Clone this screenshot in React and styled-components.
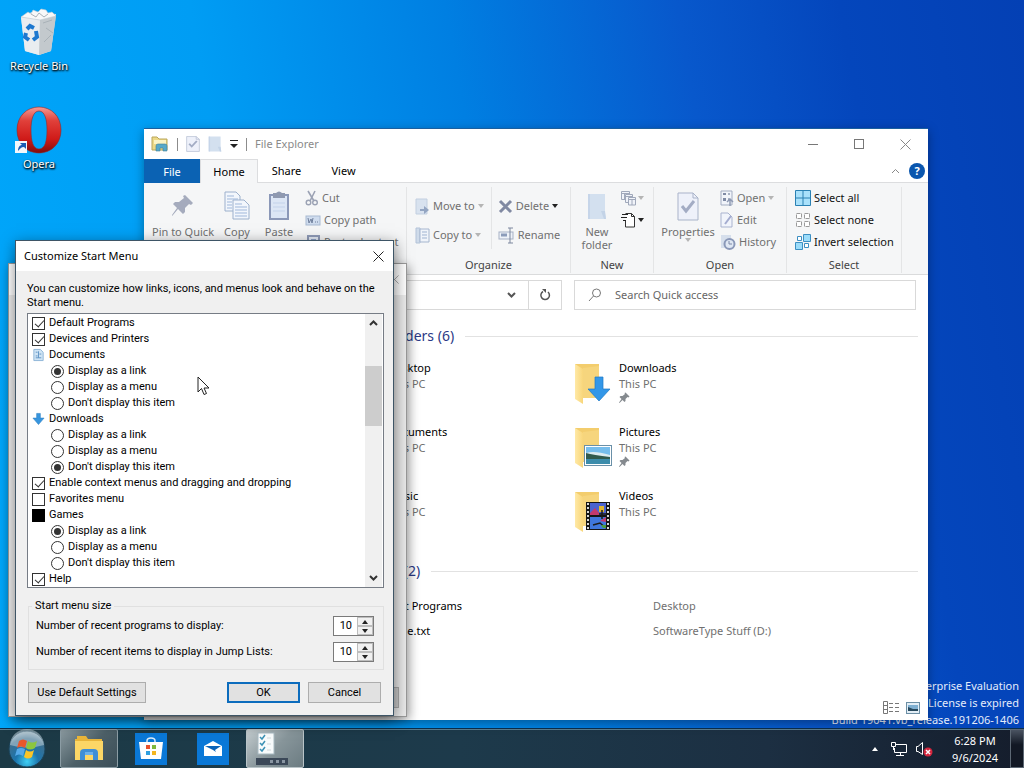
import React from "react";
import styled, { createGlobalStyle, css } from "styled-components";

const GlobalStyle = createGlobalStyle`
	* {
		box-sizing: border-box;
		margin: 0;
		padding: 0;
	}

	body {
		font-family: "Noto Sans", "Open Sans", sans-serif;
		font-size: 11px;
		line-height: 16px;
		color: #000;
		overflow: hidden;
	}

	button,
	input {
		font: inherit;
		color: inherit;
	}

	button {
		border: 0;
		background: transparent;
	}

	svg {
		display: block;
		flex: none;
	}
`;

// # ICONS

const RecycleBin = () => (
	<svg width="40" height="48" viewBox="0 0 40 48">
		<path d="M2 9 L13 4 L37 6 L32 43 L20 47 L6 43Z" fill="#dfe4e8" />
		<path d="M2 9 L21 12 L20 47 L6 43Z" fill="#e9edf0" />
		<path d="M21 12 L37 8 L32 43 L20 47Z" fill="#c3c9cd" />
		<path d="M2 9 L9 4 L12 6 L14 2 L19 4 L22 1 L27 2 L29 5 L33 4 L37 8 L21 12Z" fill="#f7f8f9" stroke="#b8c6cf" strokeWidth=".6" />
		<path d="M12 6 L17 9 L20 5 L25 9 L29 6 M24 15 L33 12 M27 20 L34 25 M25 34 L32 27" stroke="#a9b2b8" fill="none" />
		<g fill="none" stroke="#1d78cf" strokeWidth="4">
			<path d="M8 21 L11 18 L15 20" />
			<path d="M17 23 L18 29 L14 32" />
			<path d="M10 32 L6 29 L7 25" />
		</g>
	</svg>
);

const OperaLogo = () => (
	<svg width="48" height="48" viewBox="0 0 48 48">
		<defs>
			<linearGradient id="opera" x1="0" y1="0" x2="0" y2="1">
				<stop offset="0" stopColor="#f59a94" />
				<stop offset=".3" stopColor="#e0403a" />
				<stop offset=".7" stopColor="#cf1a18" />
				<stop offset="1" stopColor="#7f0d0d" />
			</linearGradient>
		</defs>
		<path
			fillRule="evenodd"
			fill="url(#opera)"
			stroke="#8c2a2e"
			strokeWidth=".6"
			d="M24 1 C36 1 46 10 46 24 C46 38 36 47 24 47 C12 47 2 38 2 24 C2 10 12 1 24 1Z M24 5 C18 5 16 14 16 24 C16 35 18 43 24 43 C30 43 32 35 32 24 C32 14 30 5 24 5Z"
		/>
		<rect x="0" y="35" width="12" height="12" fill="#f4f7fb" />
		<path d="M3 45 C3 41 5 39 7 39 L5 37 H11 V43 L9 41 C6 41 5 43 3 45Z" fill="#1c5cb4" />
	</svg>
);

const ExplorerMini = () => (
	<svg width="18" height="16" viewBox="0 0 18 16">
		<path d="M1 1 H6 L8 3 H16 V14 H1Z" fill="#ecd987" stroke="#b9a65a" />
		<path d="M3 4 H15 V8 H3Z" fill="#fbf3c4" />
		<path d="M5 15 V10 Q5 8 7 8 H14 Q16 8 16 10 V15 H12 V12 H9 V15Z" fill="#57a9c9" stroke="#3f8098" strokeWidth=".6" />
	</svg>
);

const PageCheck = ({ w = 14, h = 16 }) => (
	<svg width={w} height={h} viewBox="0 0 22 29" preserveAspectRatio="none">
		<path d="M1 1 H16 L21 6 V28 H1Z" fill="#eef1fa" stroke="#a9b3c9" />
		<path d="M16 1 V6 H21" fill="none" stroke="#a9b3c9" />
		<path d="M5 14 L9 19 L17 9" fill="none" stroke="#a3acc4" strokeWidth="3" />
	</svg>
);

const FolderPale = ({ w = 14, h = 16 }) => (
	<svg width={w} height={h} viewBox="0 0 20 27" preserveAspectRatio="none">
		<path d="M1 1 H18 V20 L19 26 H1Z" fill="#d3e0ef" />
		<path d="M1 1 H3 V26 H1Z" fill="#c6d5e9" />
		<path d="M14 18 H18 L19 26 H17Z" fill="#c3d3e7" />
	</svg>
);

const PinBig = () => (
	<svg width="22" height="24" viewBox="0 0 22 24">
		<path d="M13 1 L21 9 L19 11 L17 10 L13 14 L13 18 L11 20 L6 15 L1 21 L0 22 L0 21 L5 14 L1 10 L3 8 L7 8 L12 4 L11 2Z" fill="#a5abbd" />
	</svg>
);

const PinSmall = () => (
	<svg width="11" height="12" viewBox="0 0 22 24">
		<path d="M13 1 L21 9 L19 11 L17 10 L13 14 L13 18 L11 20 L7 16 L1 22 L0 21 L5 14 L1 10 L3 8 L7 8 L12 4 L11 2Z" fill="#858a8f" />
	</svg>
);

const CopyBig = () => (
	<svg width="26" height="30" viewBox="0 0 26 30">
		<g fill="#f2f6fc" stroke="#9cb0cc">
			<path d="M1 1 H12 L16 5 V20 H1Z" />
			<path d="M9 9 H20 L25 14 V28 H9Z" />
		</g>
		<path d="M3 5 H10 M3 8 H14 M3 11 H8 M3 14 H8 M3 17 H8 M11 13 H18 M11 16 H23 M11 19 H23 M11 22 H23 M11 25 H23" stroke="#9fb7da" />
	</svg>
);

const PasteBig = () => (
	<svg width="22" height="30" viewBox="0 0 22 30">
		<rect x="2" y="4" width="18" height="24" fill="#dce6f5" stroke="#8b98b8" strokeWidth="2" />
		<path d="M5 2 H8 Q11 -1 14 2 H17 V7 H5Z" fill="#8f99b0" />
		<path d="M5 12 H17 M5 16 H17 M5 20 H17" stroke="#c3d2ea" />
	</svg>
);

const Scissors = () => (
	<svg width="14" height="16" viewBox="0 0 14 16" fill="none" stroke="#9ba2b4">
		<path d="M3 1 L9 11 M10 1 L5 11" strokeWidth="1.6" />
		<circle cx="3.500" cy="12.500" r="2.300" strokeWidth="1.400" />
		<circle cx="10" cy="12.500" r="2.300" strokeWidth="1.400" />
	</svg>
);

const PathIcon = () => (
	<svg width="16" height="16" viewBox="0 0 16 16">
		<rect x="1" y="4" width="14" height="9" fill="#cfdcee" stroke="#a9bad2" />
		<path d="M3 6 L4 11 L6 7 L7 11 L8 6 M10 10 H11 M12 10 H13" stroke="#6f7f9c" fill="none" />
	</svg>
);

const ClipIcon = () => (
	<svg width="16" height="16" viewBox="0 0 16 16">
		<rect x="3" y="2" width="11" height="13" fill="#e4ebf6" stroke="#8f9bb8" strokeWidth="2" />
		<rect x="6" y="5" width="5" height="5" fill="#8fa3c9" />
	</svg>
);

const MoveIcon = () => (
	<svg width="15" height="17" viewBox="0 0 15 17">
		<path d="M1 1 H12 V16 H1Z" fill="#d8e2ef" stroke="#c2cfe0" />
		<path d="M5 11 H9 V8 L14 12 L9 16 V13 H5Z" fill="#93a5c2" />
	</svg>
);

const CopyToIcon = () => (
	<svg width="15" height="17" viewBox="0 0 15 17">
		<path d="M1 1 H5 V16 H1Z" fill="#cfdbea" stroke="#b3c3d8" />
		<path d="M5 2 H14 V15 H5Z" fill="#f0f4fa" stroke="#a6b6cf" />
		<path d="M7 5 H12 M7 8 H12 M7 11 H12" stroke="#9fb3d1" />
	</svg>
);

const DeleteIcon = () => (
	<svg width="15" height="15" viewBox="0 0 15 15">
		<path d="M2 2 L13 13 M13 2 L2 13" stroke="#8089a2" strokeWidth="3" />
	</svg>
);

const RenameIcon = () => (
	<svg width="17" height="17" viewBox="0 0 17 17" fill="none">
		<rect x="1" y="5" width="14" height="7" fill="#eef2f8" stroke="#a7b1c6" />
		<path d="M3 8 H9" stroke="#8c9cba" strokeWidth="3" />
		<path d="M10 1 H15 M12 1 V16 M10 16 H15" stroke="#7d879e" />
	</svg>
);

const NewItemIcon = () => (
	<svg width="16" height="16" viewBox="0 0 16 16" fill="#f0f3f9" stroke="#a0a8ba">
		<path d="M.5 1.500 H8.500 V9.500 H.5Z M.5 3.500 H8.500 M3.500 3.500 V9" />
		<path d="M4.500 4.500 H11.500 V12.500 H4.500Z M4.500 6.500 H11.500" />
		<path d="M7.500 7.500 H14.500 V15 H7.500Z M7.500 9.500 H14.500 M11 9.500 V15" />
	</svg>
);

const EasyAccessIcon = () => (
	<svg width="16" height="16" viewBox="0 0 16 16" fill="none" stroke="#333">
		<path d="M4.500 1.500 H10.500 L13.500 4.500 V15 H4.500 V9" fill="#fff" />
		<path d="M10.500 1.500 V4.500 H13.500" />
		<path d="M1 2.500 H7 M0 5.500 H6 M2 8.500 H5" stroke="#222" />
	</svg>
);

const OpenIcon = () => (
	<svg width="14" height="16" viewBox="0 0 14 16" fill="none">
		<path d="M1 1 H12 V15 H1Z" fill="#f1f4fa" stroke="#a3adc2" />
		<path d="M3 3 H6 V5 H3Z M3 8 H6 V11 H3Z" fill="#7f8aa5" />
		<path d="M8 4 H10 M8 9 H10 M10 16 V10 M7 12 L10 9 L13 12" stroke="#8f9ab3" strokeWidth="1.500" />
	</svg>
);

const EditIcon = () => (
	<svg width="14" height="16" viewBox="0 0 14 16" fill="none">
		<path d="M1 1 H8 L12 5 V15 H1Z" fill="#f1f4fb" stroke="#a9b3cf" />
		<path d="M5 12 L11 4" stroke="#a4acd0" strokeWidth="2" />
	</svg>
);

const HistoryIcon = () => (
	<svg width="16" height="16" viewBox="0 0 16 16" fill="none">
		<path d="M1 1 H11 V14 H1Z" fill="#d6dfec" />
		<circle cx="9.500" cy="10" r="5" fill="#dfe7f3" stroke="#8a98b8" strokeWidth="2" />
		<path d="M9 7 V10 H12" stroke="#7c89a8" />
	</svg>
);

const SelectAllIcon = () => (
	<svg width="16" height="16" viewBox="0 0 16 16">
		<path d="M.5 .5 H15.500 V15.500 H.5Z M8 0 V16 M0 8 H16" fill="#a9e1fb" stroke="#2b81b3" />
	</svg>
);

const SelectNoneIcon = () => (
	<svg width="16" height="16" viewBox="0 0 16 16">
		<path
			d="M1.500 1.500 H6.500 V6.500 H1.500Z M9.500 1.500 H14.500 V6.500 H9.500Z M1.500 9.500 H6.500 V14.500 H1.500Z M9.500 9.500 H14.500 V14.500 H9.500Z"
			fill="#fff"
			stroke="#9b9b9b"
			strokeDasharray="4 1"
		/>
	</svg>
);

const InvertIcon = () => (
	<svg width="16" height="16" viewBox="0 0 16 16" stroke="#3c8fc2">
		<path d="M8.500 .5 H15.500 V7.500 H8.500Z M.5 8.500 H7.500 V15.500 H.5Z" fill="#9bdcfa" />
		<path d="M2.500 2.500 H6.500 V6.500 H2.500Z M9.500 9.500 H13.500 V13.500 H9.500Z" fill="#fff" />
	</svg>
);

const FolderBase = ({ children }) => (
	<svg width="48" height="48" viewBox="0 0 48 48">
		<defs>
			<linearGradient id="flap" x1="0" y1="0" x2="1" y2="0">
				<stop offset="0" stopColor="#ffe9a6" />
				<stop offset="1" stopColor="#f8d67a" />
			</linearGradient>
		</defs>
		<path d="M9 4 H33 V37 H16Z" fill="#f3cd6d" />
		<path d="M9 4 L17 9 V44 L9 39Z" fill="url(#flap)" />
		<path d="M17 8 L33 6 V38 L17 38Z" fill="#f6d57d" />
		{children}
	</svg>
);

const DownloadsFolder = () => (
	<FolderBase>
		<path d="M29 17 H37 V29 H44 L33 41 L22 29 H29Z" fill="#3397e8" stroke="#1d78c6" strokeWidth=".7" />
	</FolderBase>
);

const PicturesFolder = () => (
	<FolderBase>
		<rect x="18.500" y="21.500" width="27" height="20" fill="#fff" stroke="#6a90a8" />
		<rect x="20" y="23" width="24" height="9" fill="#76bdec" />
		<path d="M20 29 Q28 26 44 31 V34 H20Z" fill="#dcebf0" />
		<path d="M20 29 Q27 31 44 33 V36 H20Z" fill="#315a4d" />
		<rect x="20" y="35" width="24" height="5" fill="#3c8cab" />
	</FolderBase>
);

const VideosFolder = () => (
	<FolderBase>
		<rect x="20" y="14" width="24" height="28" fill="#151515" />
		<path d="M22 15 V42 M42 15 V42" stroke="#d8d8d8" strokeWidth="2" strokeDasharray="2 2" />
		<rect x="24" y="15" width="16" height="12" fill="#4b63cf" />
		<rect x="24" y="29" width="16" height="12" fill="#3f77dc" />
		<path d="M24 25 L29 20 L33 25 V27 H24Z M34 33 L40 29 V34Z" fill="#c23a6d" />
		<path d="M33 18 H38 V24 H33Z" fill="#e0b62d" />
		<path d="M33 26 H40 M36 22 V31 M27 37 L34 35 L40 40" stroke="#1b1b1b" strokeWidth="1.500" fill="none" />
		<path d="M35 37 H40 V40 H37Z" fill="#4b9c3f" />
	</FolderBase>
);

const DocMini = () => (
	<svg width="13" height="14" viewBox="0 0 14 14">
		<path d="M2 1 H9 L12 4 V13 H2Z" fill="#cfe4f5" stroke="#8ab3d6" />
		<path d="M4 4 H6 M8 6 H10 M4 8 H6 M4 10 H10 M7 3 V10" stroke="#5e93c4" />
	</svg>
);

const DownMini = () => (
	<svg width="13" height="14" viewBox="0 0 14 14">
		<path d="M5 1 H9 V6 H13 L7 13 L1 6 H5Z" fill="#3795de" stroke="#2a7fc4" strokeWidth=".6" />
	</svg>
);

const BlackMini = () => (
	<svg width="13" height="13" viewBox="0 0 13 13">
		<rect width="13" height="13" fill="#000" />
	</svg>
);

const CloseIcon = ({ size = 11, color = "#222" }) => (
	<svg width={size} height={size} viewBox="0 0 11 11">
		<path d="M.5 .5 L10.500 10.500 M10.500 .5 L.5 10.500" stroke={color} />
	</svg>
);

const Chevron = ({ up, color = "#333", width = 2 }) => (
	<svg width="9" height="6" viewBox="0 0 9 6">
		<path d={up ? "M1 5 L4.500 1.500 L8 5" : "M1 1 L4.500 4.500 L8 1"} fill="none" stroke={color} strokeWidth={width} />
	</svg>
);

const Caret = ({ color = "#222", up }) => (
	<svg width="6" height="4" viewBox="0 0 6 4">
		<path d={up ? "M0 4 H6 L3 0Z" : "M0 0 H6 L3 4Z"} fill={color} />
	</svg>
);

const MoreCaret = () => (
	<svg width="8" height="8" viewBox="0 0 8 8">
		<path d="M0 0 H8 V1 H0Z M0 4 H8 L4 8Z" fill="#222" />
	</svg>
);

const StartOrb = () => (
	<svg width="40" height="40" viewBox="0 0 40 40">
		<defs>
			<radialGradient id="orb" cx=".5" cy=".85" r=".8">
				<stop offset="0" stopColor="#3fd0f5" />
				<stop offset=".4" stopColor="#1c74ac" />
				<stop offset=".8" stopColor="#3d6f8e" />
				<stop offset="1" stopColor="#93aebd" />
			</radialGradient>
		</defs>
		<circle cx="20" cy="20" r="18" fill="url(#orb)" stroke="#1a4258" />
		<path d="M3 16 A17 16 0 0 1 37 16 Q20 21 3 16Z" fill="#c7d8e0" opacity=".5" />
		<path d="M12 12 Q16 9 20 12 L18 19 Q14 16 10 19Z" fill="#e8582c" />
		<path d="M21 12 Q25 15 30 12 L28 19 Q23 22 19 19Z" fill="#8cc63f" />
		<path d="M10 20 Q14 18 18 20 L16 27 Q12 24 8 27Z" fill="#56a9e8" />
		<path d="M19 21 Q23 24 27 21 L25 28 Q21 31 17 28Z" fill="#fbc527" />
	</svg>
);

const TaskFolder = () => (
	<svg width="30" height="28" viewBox="0 0 30 28">
		<path d="M1 4 H3 V1 H12 L14 4 H28 V25 H1Z" fill="#e9b53a" />
		<path d="M1 6 H29 V25 H1Z" fill="#fcd666" />
		<path d="M6 25 V18 Q6 14 10 14 H20 Q24 14 24 18 V25 H19 V20 H11 V25Z" fill="#3f8ed6" />
		<path d="M11 20 H19 V17 H11Z" fill="#6cb0ea" />
	</svg>
);

const StoreIcon = () => (
	<svg width="32" height="32" viewBox="0 0 32 32">
		<rect width="32" height="32" fill="#0a78d7" />
		<path d="M12 10 V8 Q12 5 16 5 Q20 5 20 8 V10" fill="none" stroke="#dcecf9" strokeWidth="1.500" />
		<path d="M4 9 H28 L26 26 H6Z" fill="#fff" />
		<path d="M11 12 H15 V16 H11Z" fill="#e9512b" />
		<path d="M17 12 H21 V16 H17Z" fill="#7fb93c" />
		<path d="M11 18 H15 V22 H11Z" fill="#2f9fe0" />
		<path d="M17 18 H21 V22 H17Z" fill="#f3b51f" />
	</svg>
);

const MailIcon = () => (
	<svg width="32" height="32" viewBox="0 0 32 32">
		<rect width="32" height="32" fill="#0a78d7" />
		<path d="M7 13 L16 8 L25 13 V23 H7Z" fill="#fff" />
		<path d="M8 13 L24 13 L18 17 L19 19 L16 17Z" fill="#0a63b8" />
	</svg>
);

const SettingsTaskIcon = () => (
	<svg width="34" height="34" viewBox="0 0 34 34">
		<rect x="3" y="1" width="16" height="21" fill="#f8fbfc" stroke="#a8bac2" />
		<path d="M5 5 L7 7 L10 3 M5 11 L7 13 L10 9 M5 17 L7 19 L10 15" fill="none" stroke="#3c91b5" strokeWidth="1.500" />
		<path d="M12 6 H16 M12 12 H16 M12 18 H16" stroke="#d0d8dc" />
		<rect x="1" y="26" width="32" height="7" fill="#3b4858" />
		<path d="M15 28 H18 V31 H15Z M21 28 H24 V31 H21Z M27 28 H30 V31 H27Z" fill="#8995a2" />
	</svg>
);

const NetworkIcon = () => (
	<svg width="18" height="16" viewBox="0 0 18 16" fill="none" stroke="#fff">
		<path d="M6 3.500 H16.500 V11.500 H4.500 V7 M10.500 12 V14 M6 14.500 H14" />
		<path d="M1.500 1.500 H5.500 V5.500 H1.500Z M3.500 6 V9" />
	</svg>
);

const VolumeIcon = () => (
	<svg width="18" height="16" viewBox="0 0 18 16" fill="none">
		<path d="M1.500 5.500 H3 L7.500 1.500 V13.500 L3 10.500 H1.500Z" stroke="#fff" />
		<circle cx="13" cy="11" r="4.500" fill="#d5263e" />
		<path d="M11 9 L15 13 M15 9 L11 13" stroke="#fff" strokeWidth="1.500" />
	</svg>
);

const CursorIcon = () => (
	<svg width="13" height="20" viewBox="0 0 13 20">
		<path d="M1 1 V16 L4.500 12.500 L7 18.500 L9.500 17.500 L7 12 H12Z" fill="#fff" stroke="#222" />
	</svg>
);

// # FILE EXPLORER

const Explorer = () => {
	return (
		<ExplorerWindow>
			<QuickBar>
				<ExplorerMini />
				<Divider />
				<PageCheck />
				<FolderPale />
				<MoreCaret />
				<Divider />
				<h1>File Explorer</h1>
				<WindowButtons>
					<button aria-label="Minimize">
						<svg width="11" height="11">
							<path d="M0 5.500 H10" stroke="#777" />
						</svg>
					</button>
					<button aria-label="Maximize">
						<svg width="11" height="11">
							<rect x=".5" y=".5" width="9" height="9" fill="none" stroke="#777" />
						</svg>
					</button>
					<button aria-label="Close">
						<CloseIcon color="#888" />
					</button>
				</WindowButtons>
			</QuickBar>

			<TabBar>
				<Tab $file>File</Tab>
				<Tab $active>Home</Tab>
				<Tab>Share</Tab>
				<Tab>View</Tab>
				<TabTools>
					<button aria-label="Collapse ribbon">
						<Chevron up color="#888" width={1} />
					</button>
					<HelpButton>?</HelpButton>
				</TabTools>
			</TabBar>

			<Ribbon>
				<Group $width="263px">
					<GroupBody $joined>
						<BigButton $width="66px">
							<Glyph>
								<PinBig />
							</Glyph>
							Pin to Quick access
						</BigButton>
						<BigButton $width="42px">
							<Glyph>
								<CopyBig />
							</Glyph>
							Copy
						</BigButton>
						<BigButton $width="42px">
							<Glyph>
								<PasteBig />
							</Glyph>
							Paste
						</BigButton>
						<Stack $inset="5px">
							<SmallButton>
								<Scissors />
								Cut
							</SmallButton>
							<SmallButton>
								<PathIcon />
								Copy path
							</SmallButton>
							<SmallButton>
								<ClipIcon />
								Paste shortcut
							</SmallButton>
						</Stack>
					</GroupBody>
					<GroupLabel>Clipboard</GroupLabel>
				</Group>

				<Group $width="164px">
					<GroupBody>
						<Stack $loose $divided>
							<SmallButton>
								<MoveIcon />
								Move to
								<Caret color="#b5b5b5" />
							</SmallButton>
							<SmallButton>
								<CopyToIcon />
								Copy to
								<Caret color="#b5b5b5" />
							</SmallButton>
						</Stack>
						<Stack $loose>
							<SmallButton>
								<DeleteIcon />
								Delete
								<Caret />
							</SmallButton>
							<SmallButton>
								<RenameIcon />
								Rename
							</SmallButton>
						</Stack>
					</GroupBody>
					<GroupLabel>Organize</GroupLabel>
				</Group>

				<Group $width="83px">
					<GroupBody>
						<BigButton $width="40px">
							<Glyph>
								<FolderPale w={20} h={27} />
							</Glyph>
							New folder
						</BigButton>
						<Stack>
							<SmallButton aria-label="New item" $tight>
								<NewItemIcon />
								<Caret color="#b5b5b5" />
							</SmallButton>
							<SmallButton aria-label="Easy access" $tight>
								<EasyAccessIcon />
								<Caret />
							</SmallButton>
						</Stack>
					</GroupBody>
					<GroupLabel>New</GroupLabel>
				</Group>

				<Group $width="133px">
					<GroupBody>
						<BigButton $width="56px">
							<Glyph>
								<PageCheck w={22} h={29} />
							</Glyph>
							Properties
							<Caret color="#b5b5b5" />
						</BigButton>
						<Stack>
							<SmallButton>
								<OpenIcon />
								Open
								<Caret color="#b5b5b5" />
							</SmallButton>
							<SmallButton>
								<EditIcon />
								Edit
							</SmallButton>
							<SmallButton>
								<HistoryIcon />
								History
							</SmallButton>
						</Stack>
					</GroupBody>
					<GroupLabel>Open</GroupLabel>
				</Group>

				<Group $width="115px">
					<GroupBody>
						<Stack $inset="2px">
							<SmallButton $enabled>
								<SelectAllIcon />
								Select all
							</SmallButton>
							<SmallButton $enabled>
								<SelectNoneIcon />
								Select none
							</SmallButton>
							<SmallButton $enabled>
								<InvertIcon />
								Invert selection
							</SmallButton>
						</Stack>
					</GroupBody>
					<GroupLabel>Select</GroupLabel>
				</Group>
			</Ribbon>

			<AddressRow>
				<AddressBox>
					<button aria-label="Previous locations">
						<Chevron color="#555" />
					</button>
					<button aria-label="Refresh">
						<svg width="12" height="12" viewBox="0 0 12 12">
							<path d="M9 3 A4.300 4.300 0 1 1 4 2.500" fill="none" stroke="#555" strokeWidth="1.500" />
							<path d="M3 0 H7 V4Z" fill="#555" />
						</svg>
					</button>
				</AddressBox>
				<SearchBox>
					<svg width="14" height="14" viewBox="0 0 14 14" fill="none" stroke="#777">
						<circle cx="8.500" cy="5" r="4" />
						<path d="M5.500 8 L1 13" />
					</svg>
					<input type="text" aria-label="Search" placeholder="Search Quick access" />
				</SearchBox>
			</AddressRow>

			<Content>
				<SectionTitle>Frequent folders (6)</SectionTitle>
				<Folders>
					<Folder name="Desktop" icon={<FolderBase />} />
					<Folder name="Downloads" icon={<DownloadsFolder />} pinned />
					<Folder name="Documents" icon={<FolderBase />} />
					<Folder name="Pictures" icon={<PicturesFolder />} pinned />
					<Folder name="Music" icon={<FolderBase />} />
					<Folder name="Videos" icon={<VideosFolder />} />
				</Folders>
				<SectionTitle $recent>Recent files (2)</SectionTitle>
				<Files>
					<tbody>
						<tr>
							<td>Default Programs</td>
							<td>Desktop</td>
						</tr>
						<tr>
							<td>Readme.txt</td>
							<td>SoftwareType Stuff (D:)</td>
						</tr>
					</tbody>
				</Files>
			</Content>

			<StatusBar>
				<button aria-label="Details view">
					<svg width="16" height="13" viewBox="0 0 16 13" fill="none" stroke="#777">
						<path d="M.5 .5 H4.500 V12.500 H.5Z M.5 4.500 H4.500 M.5 8.500 H4.500" />
						<path d="M6 2.500 H10 M12 2.500 H16 M6 6.500 H10 M12 6.500 H16 M6 10.500 H10 M12 10.500 H16" />
					</svg>
				</button>
				<button aria-label="Large icons view">
					<svg width="14" height="12" viewBox="0 0 14 12">
						<rect x=".5" y=".5" width="13" height="11" fill="#e3eef6" stroke="#6c8fa5" />
						<path d="M2 3 H12 V9 H2Z" fill="#7fb0d2" />
						<path d="M2 5 L7 7 H12 V9 H2Z" fill="#27485c" />
					</svg>
				</button>
			</StatusBar>
		</ExplorerWindow>
	);
};

const Folder = ({ name, icon, pinned }) => (
	<FolderItem>
		{icon}
		<div>
			<h3>{name}</h3>
			<p>This PC</p>
			{pinned && <PinSmall />}
		</div>
	</FolderItem>
);

// # CUSTOMIZE DIALOG

const choices = ["Display as a link", "Display as a menu", "Don't display this item"];

const settings = [
	{ label: "Default Programs", checked: true },
	{ label: "Devices and Printers", checked: true },
	{ label: "Documents", icon: <DocMini />, choice: 0 },
	{ label: "Downloads", icon: <DownMini />, choice: 2 },
	{ label: "Enable context menus and dragging and dropping", checked: true },
	{ label: "Favorites menu", checked: false },
	{ label: "Games", icon: <BlackMini />, choice: 0 },
	{ label: "Help", checked: true },
];

const Setting = ({ label, icon, checked, choice }) => {
	if (!icon) {
		return (
			<Option>
				<input type="checkbox" defaultChecked={checked} />
				{label}
			</Option>
		);
	}

	return (
		<div role="radiogroup" aria-label={label}>
			<Option as="div">
				{icon}
				{label}
			</Option>
			{choices.map((text, i) => (
				<Option key={text} $nested>
					<input type="radio" name={label} defaultChecked={i === choice} />
					{text}
				</Option>
			))}
		</div>
	);
};

const NumberRow = ({ label }) => (
	<SpinRow>
		<span>{label}</span>
		<Spinner>
			<input type="text" defaultValue="10" />
			<div>
				<button type="button" aria-label="Increase">
					<Caret up />
				</button>
				<button type="button" aria-label="Decrease">
					<Caret />
				</button>
			</div>
		</Spinner>
	</SpinRow>
);

const CustomizeDialog = () => {
	return (
		<Dialog role="dialog" aria-label="Customize Start Menu">
			<DialogTitle>
				<h2>Customize Start Menu</h2>
				<button aria-label="Close">
					<CloseIcon />
				</button>
			</DialogTitle>
			<DialogBody>
				<p>You can customize how links, icons, and menus look and behave on the Start menu.</p>
				<ListBox>
					<div>
						{settings.map((item) => (
							<Setting key={item.label} {...item} />
						))}
					</div>
					<ScrollBar>
						<button aria-label="Scroll up">
							<Chevron up />
						</button>
						<Thumb />
						<button aria-label="Scroll down">
							<Chevron />
						</button>
					</ScrollBar>
				</ListBox>
				<SizeBox>
					<legend>Start menu size</legend>
					<NumberRow label="Number of recent programs to display:" />
					<NumberRow label="Number of recent items to display in Jump Lists:" />
				</SizeBox>
				<Actions>
					<PushButton $wide>Use Default Settings</PushButton>
					<PushButton $primary>OK</PushButton>
					<PushButton>Cancel</PushButton>
				</Actions>
			</DialogBody>
		</Dialog>
	);
};

const Taskbar = () => (
	<Bar>
		<Orb aria-label="Start">
			<StartOrb />
		</Orb>
		<TaskButton aria-label="File Explorer" $open>
			<TaskFolder />
		</TaskButton>
		<TaskButton aria-label="Store">
			<StoreIcon />
		</TaskButton>
		<TaskButton aria-label="Mail">
			<MailIcon />
		</TaskButton>
		<TaskButton aria-label="Start menu properties" $open $front>
			<SettingsTaskIcon />
		</TaskButton>
		<Tray>
			<button aria-label="Show hidden icons">
				<Caret up color="#fff" />
			</button>
			<button aria-label="Network">
				<NetworkIcon />
			</button>
			<button aria-label="Volume">
				<VolumeIcon />
			</button>
			<Clock>
				<span>6:28 PM</span>
				<span>9/6/2024</span>
			</Clock>
			<ShowDesktop aria-label="Show desktop" />
		</Tray>
	</Bar>
);

const App = () => {
	return (
		<Screen>
			<GlobalStyle />
			<Desktop>
				<Shortcuts>
					<Shortcut>
						<RecycleBin />
						Recycle Bin
					</Shortcut>
					<Shortcut>
						<OperaLogo />
						Opera
					</Shortcut>
				</Shortcuts>
				<Watermark>
					<p>Windows 10 Enterprise Evaluation</p>
					<p>Windows License is expired</p>
					<p>Build 19041.vb_release.191206-1406</p>
				</Watermark>
				<Explorer />
				<PropertiesWindow>
					<header>
						<CloseIcon size={9} color="#999" />
					</header>
					<footer>
						<span />
					</footer>
				</PropertiesWindow>
				<CustomizeDialog />
				<Pointer>
					<CursorIcon />
				</Pointer>
			</Desktop>
			<Taskbar />
		</Screen>
	);
};

// # STYLED COMPONENTS

const Screen = styled.div`
	height: 100vh;
	display: flex;
	flex-direction: column;
	background: linear-gradient(80deg, #00a8fb 0%, #009df4 28%, #007fe2 50%, #0858cc 70%, #0446bc 84%, #0440b4 100%);
`;

const Desktop = styled.main`
	position: relative;
	flex: 1;
	min-height: 0;
	display: flex;
	justify-content: space-between;
`;

const Shortcuts = styled.div`
	display: flex;
	flex-direction: column;
	gap: 32px;
	padding: 8px 1px;
`;

const Shortcut = styled.button`
	width: 76px;
	display: flex;
	flex-direction: column;
	align-items: center;
	gap: 2px;
	color: #fff;
	text-shadow: 0 1px 2px #000, 1px 1px 2px #000;
`;

const Watermark = styled.div`
	align-self: flex-end;
	padding-right: 5px;
	color: #e4ecfa;
	text-align: right;
	line-height: 17px;
`;

const ExplorerWindow = styled.section`
	position: absolute;
	top: 128px;
	left: 144px;
	right: 96px;
	bottom: 8px;
	display: flex;
	flex-direction: column;
	border-top: 1px solid #1a5f9f;
	background: #fff;
	box-shadow: 0 3px 10px rgba(0, 0, 0, 0.35);
	overflow: hidden;
`;

const QuickBar = styled.header`
	height: 30px;
	padding-left: 7px;
	display: flex;
	align-items: center;
	gap: 8px;

	h1 {
		font-size: 11px;
		font-weight: 400;
		color: #8a8a8a;
	}
`;

const Divider = styled.span`
	width: 1px;
	height: 13px;
	background: #8c8c8c;
`;

const WindowButtons = styled.div`
	margin-left: auto;
	display: flex;

	button {
		width: 46px;
		height: 28px;
		display: grid;
		place-items: center;
	}
`;

const TabBar = styled.nav`
	height: 24px;
	display: flex;
	border-bottom: 1px solid #dcdddf;
`;

const Tab = styled.button`
	width: 57px;
	border: 1px solid transparent;
	border-bottom: 0;

	${({ $active }) =>
		$active &&
		css`
			width: 58px;
			margin-bottom: -1px;
			border-color: #dcdddf;
			background: #f5f6f7;
		`}

	${({ $file }) =>
		$file &&
		css`
			width: 56px;
			margin-bottom: -1px;
			background: #0b62b3;
			color: #fff;
		`}
`;

const TabTools = styled.div`
	margin-left: auto;
	padding-right: 3px;
	display: flex;
	align-items: center;
	gap: 9px;
`;

const HelpButton = styled.button`
	width: 16px;
	height: 16px;
	border-radius: 50%;
	background: #0a56ae;
	color: #fff;
	font-weight: 700;
`;

const Ribbon = styled.div`
	height: 92px;
	display: flex;
	border-bottom: 1px solid #dadbdc;
	background: #f5f6f7;
`;

const Group = styled.section`
	width: ${({ $width }) => $width};
	flex: none;
	display: flex;
	flex-direction: column;
	margin: 4px 0 1px;
	padding: 0 6px;
	border-right: 1px solid #e4e5e6;
`;

const GroupBody = styled.div`
	flex: 1;
	min-height: 0;
	display: flex;
	gap: ${({ $joined }) => ($joined ? "0" : "4px")};
`;

const GroupLabel = styled.h2`
	font-size: 11px;
	font-weight: 400;
	color: #444;
	text-align: center;
`;

const BigButton = styled.button`
	width: ${({ $width }) => $width};
	flex: none;
	display: flex;
	flex-direction: column;
	align-items: center;
	color: #707070;
	line-height: 13px;
`;

const Glyph = styled.span`
	height: 38px;
	display: grid;
	place-items: center;
`;

const Stack = styled.div`
	display: flex;
	flex-direction: column;
	padding-left: ${({ $inset }) => $inset || "0"};

	${({ $loose }) =>
		$loose &&
		css`
			gap: 7px;
			padding: 8px 2px 0;
		`}

	${({ $divided }) =>
		$divided &&
		css`
			margin-bottom: 8px;
			padding-right: 7px;
			border-right: 1px solid #e4e5e6;
		`}
`;

const SmallButton = styled.button`
	height: 22px;
	display: flex;
	align-items: center;
	gap: ${({ $tight }) => ($tight ? "1px" : "3px")};
	color: ${({ $enabled }) => ($enabled ? "#111" : "#707070")};
	white-space: nowrap;
`;

const AddressRow = styled.div`
	display: flex;
	gap: 12px;
	padding: 5px 12px 6px;
`;

const AddressBox = styled.div`
	flex: 1;
	height: 30px;
	display: flex;
	justify-content: flex-end;
	border: 1px solid #d9d9d9;

	button {
		width: 33px;
		display: grid;
		place-items: center;
	}

	button + button {
		border-left: 1px solid #d9d9d9;
	}
`;

const SearchBox = styled.label`
	width: 342px;
	height: 30px;
	padding: 0 13px;
	display: flex;
	align-items: center;
	gap: 13px;
	border: 1px solid #d9d9d9;

	input {
		flex: 1;
		border: 0;
		outline: 0;
	}

	input::placeholder {
		color: #666;
	}
`;

const Content = styled.div`
	flex: 1;
	min-height: 0;
	padding: 10px 10px 0 181px;
`;

const SectionTitle = styled.h2`
	height: 20px;
	margin-top: ${({ $recent }) => ($recent ? "9px" : "0")};
	display: flex;
	align-items: center;
	gap: 11px;
	font-size: 14px;
	font-weight: 400;
	color: #2b3a86;

	&::after {
		content: "";
		flex: 1;
		height: 1px;
		background: #e2e2e2;
	}
`;

const Folders = styled.div`
	display: grid;
	grid-template-columns: repeat(auto-fill, 231px);
	padding: 14px 80px 0 10px;
`;

const FolderItem = styled.article`
	height: 64px;
	display: flex;
	gap: 5px;

	h3 {
		font-size: 11px;
		font-weight: 400;
	}

	p {
		color: #707070;
	}
`;

const Files = styled.table`
	margin-top: 12px;
	border-collapse: collapse;

	td {
		height: 25px;
		width: 282px;
		padding-left: 46px;
	}

	td + td {
		color: #707070;
	}
`;

const StatusBar = styled.footer`
	padding: 0 8px 6px;
	display: flex;
	justify-content: flex-end;
	align-items: center;
	gap: 7px;
`;

const PropertiesWindow = styled.section`
	position: absolute;
	top: 263px;
	left: 8px;
	width: 399px;
	bottom: 11px;
	display: flex;
	flex-direction: column;
	justify-content: space-between;
	border: 1px solid #9a9a9a;
	background: #ececec;
	box-shadow: 2px 3px 10px rgba(0, 0, 0, 0.4);

	header {
		height: 31px;
		padding-right: 7px;
		display: flex;
		align-items: center;
		justify-content: flex-end;
		background: #fff;
	}

	footer {
		padding: 8px 7px;
		display: flex;
		justify-content: flex-end;
	}

	span {
		width: 73px;
		height: 21px;
		border: 1px solid #adadad;
		background: #cfcfcf;
	}
`;

const Dialog = styled.section`
	position: absolute;
	top: 240px;
	left: 15px;
	width: 379px;
	border: 1px solid #3e5566;
	background: #f0f0f0;
	box-shadow: 1px 4px 14px rgba(0, 0, 0, 0.5);
`;

const DialogTitle = styled.header`
	height: 30px;
	padding: 0 9px 0 8px;
	display: flex;
	align-items: center;
	justify-content: space-between;
	background: #fff;

	h2 {
		font-size: 11px;
		font-weight: 400;
	}
`;

const DialogBody = styled.div`
	padding: 11px 9px 12px 11px;
	font-family: Roboto, "Noto Sans", sans-serif;

	p {
		line-height: 14px;
	}
`;

const ListBox = styled.div`
	height: 275px;
	margin-top: 3px;
	padding: 1px 0 0 4px;
	display: flex;
	justify-content: space-between;
	border: 1px solid #767c85;
	background: #fff;
`;

const Option = styled.label`
	height: 16px;
	padding-left: ${({ $nested }) => ($nested ? "19px" : "0")};
	display: flex;
	align-items: center;
	gap: 4px;

	input {
		appearance: none;
		position: relative;
		width: 13px;
		height: 13px;
		border: 1px solid #333;
		background: #fff;
	}

	input[type="radio"] {
		border-radius: 50%;
	}

	input[type="checkbox"]:checked::after {
		content: "";
		position: absolute;
		top: 0;
		left: 4px;
		width: 4px;
		height: 8px;
		border: solid #333;
		border-width: 0 1px 1px 0;
		transform: rotate(42deg);
	}

	input[type="radio"]:checked::after {
		content: "";
		position: absolute;
		inset: 2px;
		border-radius: 50%;
		background: #333;
	}
`;

const ScrollBar = styled.div`
	width: 17px;
	margin: -1px 1px 0 0;
	display: flex;
	flex-direction: column;
	background: #f0f0f0;

	button {
		height: 18px;
		display: grid;
		place-items: center;
	}

	button:last-child {
		margin-top: auto;
	}
`;

const Thumb = styled.div`
	height: 60px;
	margin-top: 34px;
	background: #cdcdcd;
`;

const SizeBox = styled.fieldset`
	margin: 12px 0 0 1px;
	padding: 1px 9px 4px 7px;
	border: 1px solid #e0e0e0;

	legend {
		margin-left: -4px;
		padding: 0 3px;
		line-height: 12px;
	}
`;

const SpinRow = styled.label`
	height: 26px;
	display: flex;
	align-items: center;
	justify-content: space-between;
`;

const Spinner = styled.span`
	width: 41px;
	height: 20px;
	display: flex;
	border: 1px solid #7a7a7a;
	background: #fff;

	input {
		width: 23px;
		border: 0;
		outline: 0;
		background: transparent;
		text-align: right;
		padding-right: 5px;
	}

	div {
		flex: 1;
		display: grid;
		grid-template-rows: 1fr 1fr;
	}

	button {
		display: grid;
		place-items: center;
		border: 1px solid #bdbdbd;
		background: #f0f0f0;
	}
`;

const Actions = styled.div`
	margin-top: 12px;
	padding: 0 3px 0 1px;
	display: flex;
	gap: 8px;
`;

const PushButton = styled.button`
	width: ${({ $wide }) => ($wide ? "118px" : "73px")};
	height: 21px;
	margin-right: ${({ $wide }) => ($wide ? "auto" : "0")};
	border: ${({ $primary }) => ($primary ? "2px solid #0c6cbd" : "1px solid #adadad")};
	background: #e1e1e1;
	line-height: 16px;
`;

const Pointer = styled.div`
	position: absolute;
	top: 376px;
	left: 197px;
	pointer-events: none;
`;

const Bar = styled.footer`
	height: 40px;
	display: flex;
	gap: 4px;
	border-top: 1px solid #0c2f4c;
	background: linear-gradient(90deg, #1c3a46, #1d3a4b 45%, #1c2f42 75%, #151d2c);
	box-shadow: inset 0 1px 0 #5c7f92;
`;

const Orb = styled.button`
	width: 56px;
	padding-left: 7px;
	display: flex;
	align-items: center;
`;

const TaskButton = styled.button`
	width: 58px;
	display: grid;
	place-items: center;

	${({ $open }) =>
		$open &&
		css`
			border: 1px solid #8b9ca4;
			border-radius: 2px;
			background: linear-gradient(135deg, #8a999f, #4d6068 50%, #3b4e58);
		`}

	${({ $front }) =>
		$front &&
		css`
			padding-right: 6px;
			border-color: #b9c4c8;
			background: linear-gradient(135deg, #c3cccf, #87959a 50%, #6c7c82);
		`}
`;

const Tray = styled.div`
	margin-left: auto;
	display: flex;
	align-items: center;
	gap: 7px;
	color: #fff;

	button {
		min-width: 17px;
		display: grid;
		place-items: center;
	}
`;

const Clock = styled.time`
	width: 62px;
	margin: 0 4px;
	display: flex;
	flex-direction: column;
	align-items: center;
	line-height: 17px;
`;

const ShowDesktop = styled.button`
	&& {
		min-width: 14px;
	}
	align-self: stretch;
	margin-left: -7px;
	border: 1px solid #5d6874;
	background: linear-gradient(#4a5361, #121824 40%);
`;

export default App;
